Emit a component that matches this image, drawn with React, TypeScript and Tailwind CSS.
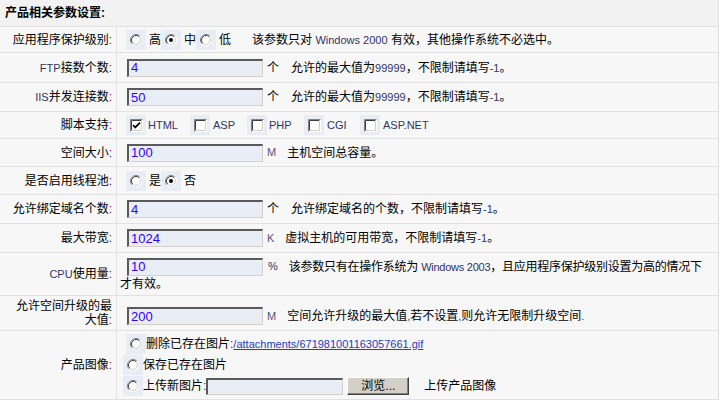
import React from "react";

const L = ({ children, className = "" }: { children: React.ReactNode; className?: string }) => (
  <span className={"font-['Liberation_Sans',sans-serif] text-[11px] text-[#333366] " + className}>{children}</span>
);

const Colon = () => <span className="text-[#800080]">:</span>;

const Radio = ({ checked = false }: { checked?: boolean }) => (
  <svg width="12" height="12" viewBox="0 0 12 12">
    <circle cx="6" cy="6" r="5.5" fill="#ffffff" />
    <path d="M9.89 2.11 A5.5 5.5 0 0 0 2.11 9.89" stroke="#808080" strokeWidth="1" fill="none" />
    <path d="M9.18 2.82 A4.5 4.5 0 0 0 2.82 9.18" stroke="#404040" strokeWidth="1" fill="none" />
    <path d="M9.89 2.11 A5.5 5.5 0 0 1 2.11 9.89" stroke="#ffffff" strokeWidth="1" fill="none" />
    <path d="M9.18 2.82 A4.5 4.5 0 0 1 2.82 9.18" stroke="#d4d0c8" strokeWidth="1" fill="none" />
    {checked && <circle cx="6" cy="6" r="2" fill="#000000" />}
  </svg>
);

const Check = ({ checked = false }: { checked?: boolean }) => (
  <svg width="13" height="13" viewBox="0 0 13 13">
    <rect x="0" y="0" width="13" height="13" fill="#ffffff" />
    <path d="M0.5 12.5 V0.5 H12.5" stroke="#808080" fill="none" />
    <path d="M1.5 11.5 V1.5 H11.5" stroke="#404040" fill="none" />
    <path d="M1.5 11.5 H11.5 V1.5" stroke="#d4d0c8" fill="none" />
    {checked && <polyline points="3,6 5.2,8.4 10,3.6" stroke="#000000" strokeWidth="1.7" fill="none" />}
  </svg>
);

const RadioCell = ({ checked = false, className = "" }: { checked?: boolean; className?: string }) => (
  <span className={"w-[20px] h-[20px] shrink-0 bg-[#e8edf5] flex items-center justify-center " + className}>
    <Radio checked={checked} />
  </span>
);

const Inp = ({ v, className = "" }: { v: string; className?: string }) => (
  <input
    readOnly
    value={v}
    className={
      "w-[136px] h-[18px] shrink-0 bg-[#e9edf5] border-t-2 border-l-2 border-t-[#5a5a5a] border-l-[#5a5a5a] border-b border-r border-b-[#d4d0c8] border-r-[#d4d0c8] pl-[2px] font-['Liberation_Sans',sans-serif] text-[13px] text-[#3300ff] outline-none " +
      className
    }
  />
);

const Label = ({ children }: { children: React.ReactNode }) => (
  <div className="w-[117px] shrink-0 border-r border-[#e1e1e1] flex items-center justify-end pr-[4px] text-right leading-[14px]">
    <span>{children}</span>
  </div>
);

export default function App() {
  const row = "flex border-b border-[#e1e1e1]";
  const val = "flex-1 flex items-center pl-[3px] min-w-0";
  return (
    <div className="w-[720px] h-[402px] bg-white font-['Liberation_Sans','Noto_Sans_CJK_SC',sans-serif] text-[12px] text-black">
      <div className="w-[719px] bg-[#f7f7f7] border-r border-[#e1e1e1]">
        <div className={row + " h-[27px] bg-[#f2f2f2] items-center pl-[5px] font-bold"}>
          产品相关参数设置<span>:</span>
        </div>

        <div className={row + " h-[26px]"}>
          <Label>
            应用程序保护级别<Colon />
          </Label>
          <div className={val}>
            <RadioCell className="ml-[6px]" />
            <span className="ml-[3px]">高</span>
            <RadioCell checked />
            <span className="ml-[3px]">中</span>
            <RadioCell />
            <span className="ml-[3px]">低</span>
            <span className="ml-[21px]">
              该参数只对 <L>Windows 2000</L> 有效，其他操作系统不必选中。
            </span>
          </div>
        </div>

        <div className={row + " h-[30px]"}>
          <Label>
            <L className="text-[#222244]">FTP</L>接数个数<Colon />
          </Label>
          <div className={val}>
            <Inp v="4" className="ml-[7px]" />
            <span className="ml-[4px]">个</span>
            <span className="ml-[12px]">
              允许的最大值为<L>99999</L>，不限制请填写<L>-1</L>。
            </span>
          </div>
        </div>

        <div className={row + " h-[29px]"}>
          <Label>
            <L className="text-[#222244]">IIS</L>并发连接数<Colon />
          </Label>
          <div className={val}>
            <Inp v="50" className="ml-[7px]" />
            <span className="ml-[4px]">个</span>
            <span className="ml-[12px]">
              允许的最大值为<L>99999</L>，不限制请填写<L>-1</L>。
            </span>
          </div>
        </div>

        <div className={row + " h-[27px]"}>
          <Label>
            脚本支持<Colon />
          </Label>
          <div className={val}>
            <div className="ml-[6px] flex items-center w-[64px]">
              <span className="w-[20px] h-[20px] bg-[#e8edf5] flex items-center justify-center"><Check checked /></span>
              <L className="ml-[2px]">HTML</L>
            </div>
            <div className="flex items-center w-[57px]">
              <span className="w-[20px] h-[20px] bg-[#e8edf5] flex items-center justify-center"><Check /></span>
              <L className="ml-[3px]">ASP</L>
            </div>
            <div className="flex items-center w-[57px]">
              <span className="w-[20px] h-[20px] bg-[#e8edf5] flex items-center justify-center"><Check /></span>
              <L className="ml-[2px]">PHP</L>
            </div>
            <div className="flex items-center w-[56px]">
              <span className="w-[20px] h-[20px] bg-[#e8edf5] flex items-center justify-center"><Check /></span>
              <L className="ml-[3px]">CGI</L>
            </div>
            <div className="flex items-center">
              <span className="w-[20px] h-[20px] bg-[#e8edf5] flex items-center justify-center"><Check /></span>
              <L className="ml-[3px]">ASP.NET</L>
            </div>
          </div>
        </div>

        <div className={row + " h-[28px]"}>
          <Label>
            空间大小<Colon />
          </Label>
          <div className={val}>
            <Inp v="100" className="ml-[7px]" />
            <L className="ml-[4px] text-[#555577]">M</L>
            <span className="ml-[11px]">主机空间总容量。</span>
          </div>
        </div>

        <div className={row + " h-[28px]"}>
          <Label>
            是否启用线程池<Colon />
          </Label>
          <div className={val}>
            <RadioCell className="ml-[6px]" />
            <span className="ml-[3px]">是</span>
            <RadioCell checked />
            <span className="ml-[3px]">否</span>
          </div>
        </div>

        <div className={row + " h-[29px]"}>
          <Label>
            允许绑定域名个数<Colon />
          </Label>
          <div className={val}>
            <Inp v="4" className="ml-[7px]" />
            <span className="ml-[4px]">个</span>
            <span className="ml-[12px]">
              允许绑定域名的个数，不限制请填写<L>-1</L>。
            </span>
          </div>
        </div>

        <div className={row + " h-[29px]"}>
          <Label>
            最大带宽<Colon />
          </Label>
          <div className={val}>
            <Inp v="1024" className="ml-[7px]" />
            <L className="ml-[4px] text-[#555577]">K</L>
            <span className="ml-[11px]">
              虚拟主机的可用带宽，不限制请填写<L>-1</L>。
            </span>
          </div>
        </div>

        <div className={row + " h-[43px]"}>
          <Label>
            <L className="text-[#222244]">CPU</L>使用量<Colon />
          </Label>
          <div className="flex-1 flex flex-col items-start pl-[3px] pt-[4px] min-w-0">
            <div className="flex items-center h-[19px] whitespace-nowrap">
              <Inp v="10" className="ml-[7px]" />
              <L className="ml-[5px] text-[#222244]">%</L>
              <span className="ml-[11px] tracking-[-0.25px]">
                该参数只有在操作系统为 <L>Windows 2003</L>，且应用程序保护级别设置为高的情况下
              </span>
            </div>
            <div className="leading-[14px] mt-[1px]">才有效。</div>
          </div>
        </div>

        <div className={row + " h-[35px]"}>
          <Label>
            允许空间升级的最
            <br />
            大值<Colon />
          </Label>
          <div className={val + " pt-[6px]"}>
            <Inp v="200" className="ml-[7px]" />
            <L className="ml-[4px] text-[#555577]">M</L>
            <span className="ml-[11px]">
              空间允许升级的最大值<L>,</L>若不设置<L>,</L>则允许无限制升级空间<L>.</L>
            </span>
          </div>
        </div>

        <div className={row + " h-[69px]"}>
          <Label>
            产品图像<Colon />
          </Label>
          <div className="flex-1 flex flex-col justify-center items-start pl-[3px] gap-[1px]">
            <div className="flex items-center ml-[6px]">
              <RadioCell />
              <span>
                删除已存在图片<Colon />
              </span>
              <a className="font-['Liberation_Sans',sans-serif] text-[11px] text-[#2040c0] underline">
                /attachments/671981001163057661.gif
              </a>
            </div>
            <div className="flex items-center ml-[3px]">
              <RadioCell />
              <span>保存已存在图片</span>
            </div>
            <div className="flex items-center ml-[3px]">
              <RadioCell />
              <span>
                上传新图片<Colon />
              </span>
              <div className="w-[137px] h-[17px] bg-[#e9edf5] border-t-2 border-l-2 border-t-[#5a5a5a] border-l-[#5a5a5a] border-b border-r border-b-[#d4d0c8] border-r-[#d4d0c8]" />
              <div className="ml-[4px] w-[62px] h-[18px] bg-[#d4d0c8] border border-t-white border-l-white border-r-[#404040] border-b-[#404040] shadow-[inset_-1px_-1px_0_#808080] flex items-center justify-center leading-none">
                浏览...
              </div>
              <span className="ml-[15px]">上传产品图像</span>
            </div>
          </div>
        </div>
      </div>
    </div>
  );
}
